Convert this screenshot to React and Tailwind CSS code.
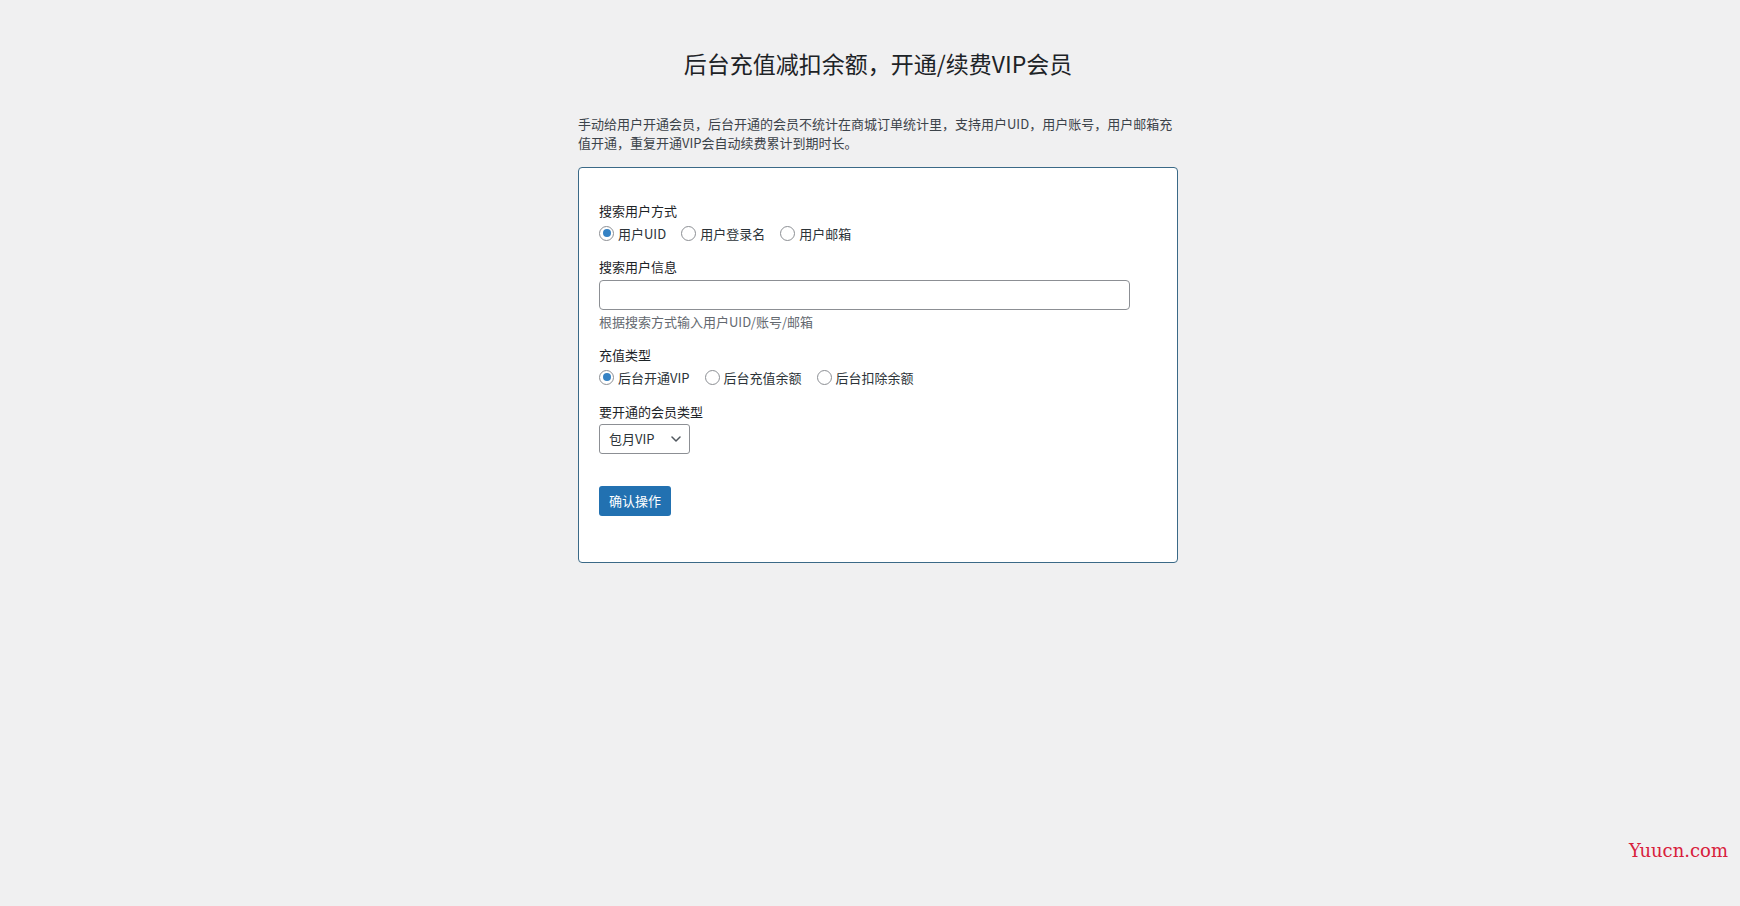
import React, { useState } from 'react';

const font = { fontFamily: '"Noto Sans CJK SC", "Noto Sans", sans-serif' };

function Radio({ label, checked, onClick }) {
  return (
    <label onClick={onClick} className="flex items-center cursor-pointer mr-[15px]">
      <span className="w-[15px] h-[15px] rounded-full border border-[#8c8f94] bg-white flex items-center justify-center">
        {checked && <span className="w-[8px] h-[8px] rounded-full bg-[#3582c4]"></span>}
      </span>
      <span className="ml-[4px] text-[13px] leading-[19px] text-[#2c3338]">{label}</span>
    </label>
  );
}

export default function App() {
  const [searchBy, setSearchBy] = useState(0);
  const [chargeType, setChargeType] = useState(0);

  const searchOptions = ['用户UID', '用户登录名', '用户邮箱'];
  const chargeOptions = ['后台开通VIP', '后台充值余额', '后台扣除余额'];

  return (
    <div className="relative min-h-screen h-[906px] bg-[#f0f0f1] text-[#1d2327]" style={font}>
      <div className="flex justify-center pl-[16px]">
        <div className="w-[600px]">
          {/* Header */}
          <h1 className="pt-[48px] text-center text-[23px] leading-[30px] font-normal text-[#1d2327]">
            后台充值减扣余额，开通/续费VIP会员
          </h1>
          <p className="mt-[36px] text-[13px] leading-[19px] text-[#3c434a]">
            手动给用户开通会员，后台开通的会员不统计在商城订单统计里，支持用户UID，用户账号，用户邮箱充<br />
            值开通，重复开通VIP会自动续费累计到期时长。
          </p>

          {/* Form card */}
          <div className="mt-[15px] bg-white border border-[#3a6987] rounded-[4px] px-[20px] pt-[33px] pb-[46px]">
            <div className="text-[13px] leading-[19px]">搜索用户方式</div>
            <div className="mt-[2px] h-[22px] flex items-center">
              {searchOptions.map((o, i) => (
                <Radio key={o} label={o} checked={searchBy === i} onClick={() => setSearchBy(i)} />
              ))}
            </div>

            <div className="mt-[13px] text-[13px] leading-[19px]">搜索用户信息</div>
            <input
              type="text"
              className="mt-[4px] block w-[531px] h-[30px] border border-[#8c8f94] rounded-[4px] bg-white px-[8px] text-[13px] outline-none"
            />
            <div className="mt-[2px] text-[13px] leading-[19px] text-[#646970]">根据搜索方式输入用户UID/账号/邮箱</div>

            <div className="mt-[14px] text-[13px] leading-[19px]">充值类型</div>
            <div className="mt-[2px] h-[22px] flex items-center">
              {chargeOptions.map((o, i) => (
                <Radio key={o} label={o} checked={chargeType === i} onClick={() => setChargeType(i)} />
              ))}
            </div>

            <div className="mt-[14px] text-[13px] leading-[19px]">要开通的会员类型</div>
            <div className="mt-[3px] w-[91px] h-[30px] border border-[#8c8f94] rounded-[3px] bg-white flex items-center justify-between pl-[9px] pr-[8px]">
              <span className="text-[13px] text-[#2c3338]">包月VIP</span>
              <svg width="10" height="6" viewBox="0 0 10 6" fill="none">
                <path d="M1 1l4 4 4-4" stroke="#50575e" strokeWidth="1.5" strokeLinecap="round" strokeLinejoin="round" />
              </svg>
            </div>

            <button className="mt-[32px] block h-[30px] px-[10px] rounded-[3px] bg-[#2271b1] text-white text-[13px]">
              确认操作
            </button>
          </div>
        </div>
      </div>

      {/* watermark */}
      <div
        className="absolute top-[840px] right-[12px] text-[18px] leading-[22px] text-[#d8203c]"
        style={{ fontFamily: '"DejaVu Serif", serif' }}
      >
        Yuucn.com
      </div>
    </div>
  );
}
